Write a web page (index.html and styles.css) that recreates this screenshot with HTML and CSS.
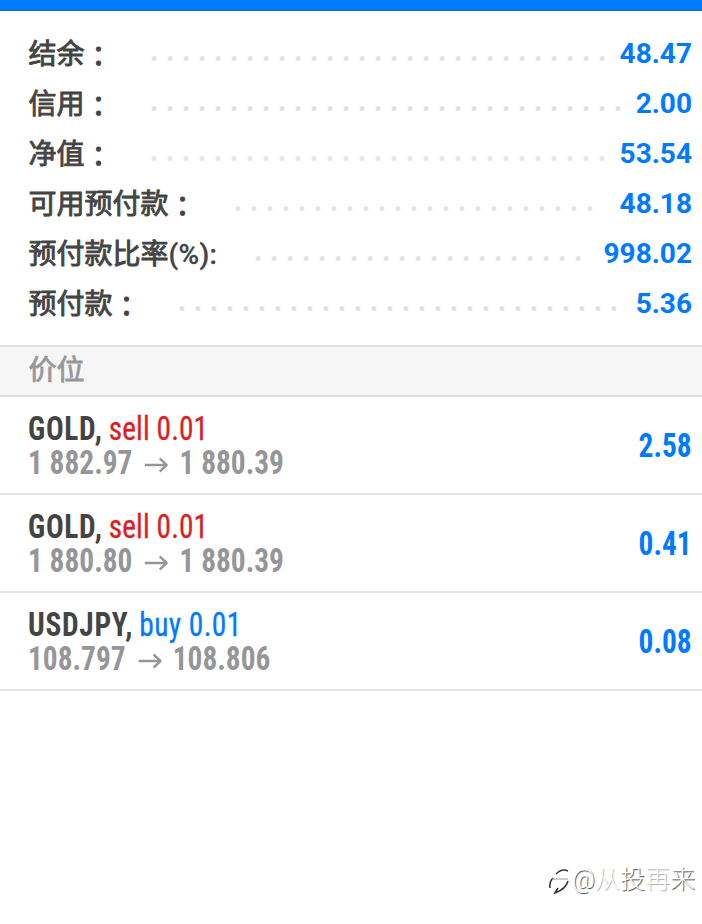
FILE: index.html
```html
<!DOCTYPE html>
<html lang="zh-CN">

<head>
    <meta charset="UTF-8">
    <meta name="viewport" content="width=device-width, initial-scale=1.0">
    <title>价位</title>
    <link rel="stylesheet" href="styles.css">
</head>

<body>
    <div class="topbar"></div>

    <div class="summary">
        <div class="line">
            <span class="label">结余<span class="colon" lang="zh-TW">：</span></span>
            <span class="leader"><span class="dots"></span></span>
            <span class="value">48.47</span>
        </div>
        <div class="line">
            <span class="label">信用<span class="colon" lang="zh-TW">：</span></span>
            <span class="leader"><span class="dots"></span></span>
            <span class="value">2.00</span>
        </div>
        <div class="line">
            <span class="label">净值<span class="colon" lang="zh-TW">：</span></span>
            <span class="leader"><span class="dots"></span></span>
            <span class="value">53.54</span>
        </div>
        <div class="line">
            <span class="label">可用预付款<span class="colon" lang="zh-TW">：</span></span>
            <span class="leader"><span class="dots"></span></span>
            <span class="value">48.18</span>
        </div>
        <div class="line">
            <span class="label">预付款比率<span class="unit">(%):</span></span>
            <span class="leader"><span class="dots"></span></span>
            <span class="value">998.02</span>
        </div>
        <div class="line">
            <span class="label">预付款<span class="colon" lang="zh-TW">：</span></span>
            <span class="leader"><span class="dots"></span></span>
            <span class="value">5.36</span>
        </div>
    </div>

    <h2 class="section-title">价位</h2>

    <div class="positions">
        <div class="position">
            <div class="info">
                <div class="name">GOLD, <span class="sell">sell 0.01</span></div>
                <div class="prices">
                    <span>1 882.97</span>
                    <svg class="arrow" viewBox="0 0 26 18"><path d="M0 9H25M17 2.5L25 9L17 15.5" /></svg>
                    <span>1 880.39</span>
                </div>
            </div>
            <div class="profit">2.58</div>
        </div>
        <div class="position">
            <div class="info">
                <div class="name">GOLD, <span class="sell">sell 0.01</span></div>
                <div class="prices">
                    <span>1 880.80</span>
                    <svg class="arrow" viewBox="0 0 26 18"><path d="M0 9H25M17 2.5L25 9L17 15.5" /></svg>
                    <span>1 880.39</span>
                </div>
            </div>
            <div class="profit">0.41</div>
        </div>
        <div class="position">
            <div class="info">
                <div class="name">USDJPY, <span class="buy">buy 0.01</span></div>
                <div class="prices">
                    <span>108.797</span>
                    <svg class="arrow" viewBox="0 0 26 18"><path d="M0 9H25M17 2.5L25 9L17 15.5" /></svg>
                    <span>108.806</span>
                </div>
            </div>
            <div class="profit">0.08</div>
        </div>
    </div>

    <div class="watermark">
        <svg class="mark" viewBox="0 0 24 28">
            <path class="mark-dark" d="M2 22Q1 16 5 12M8 8Q14 2 20 5M20 15Q18 23 7 27L10 22" />
            <path class="mark-light" d="M4 13H20" />
        </svg>
        <span>@<span class="faint">从</span>投<span class="faint">再</span>来</span>
    </div>
</body>

</html>
```

FILE: styles.css
```css
* {
    box-sizing: border-box;
}

body {
    font-family: Roboto, "Noto Sans CJK SC", sans-serif;
    background-color: #fff;
    color: #444;
    margin: 0;
    height: 924px;
    position: relative;
    overflow: hidden;
}

.topbar {
    height: 11px;
    background-color: #007aff;
    border-bottom: 1px solid #1565cf;
}

.summary {
    height: 334px;
    padding: 18px 10px 0 28.5px;
}

.line {
    display: flex;
    height: 50px;
    line-height: 50px;
    font-size: 28px;
    white-space: nowrap;
}

.label {
    padding-top: 1px;
    font-weight: 400;
    -webkit-text-stroke: 0.9px #444;
}

.colon {
    line-height: 0;
    vertical-align: -3px;
}

.unit {
    font-weight: 500;
    letter-spacing: 0.3px;
    -webkit-text-stroke: 0.3px #444;
}

.leader {
    flex: 1;
    margin: 0 8px 0 33px;
}

/* whole 16px tiles only, so the last dot is never cut */
.dots {
    display: block;
    width: round(down, 100%, 16px);
    height: 50px;
    background: radial-gradient(circle at 8px 29.5px, #e4e4e6 2px, transparent 3px) 0 0 / 16px 50px repeat-x;
}

.value {
    font-weight: 700;
    color: #007aff;
}

.section-title {
    height: 52px;
    margin: 0;
    padding-left: 28.5px;
    border-top: 2px solid #e0e0e2;
    border-bottom: 2px solid #e0e0e2;
    background-color: #f6f6f7;
    color: #96969b;
    font-size: 28px;
    font-weight: 400;
    line-height: 48px;
    -webkit-text-stroke: 0.8px #96969b;
}

.position {
    display: flex;
    justify-content: space-between;
    align-items: center;
    height: 98px;
    padding: 1px 10px 0 28px;
    border-bottom: 2px solid #e2e2e3;
    font-family: "Roboto Condensed", Roboto, sans-serif;
    font-stretch: 75%;
    font-size: 33px;
    font-weight: 700;
    line-height: 34px;
    white-space: nowrap;
}

/* squeeze the condensed face a bit further */
.name,
.prices {
    transform: scaleX(0.89);
    transform-origin: left;
}

.name {
    letter-spacing: 0.8px;
    word-spacing: -1.5px;
}

.name .sell,
.name .buy {
    font-weight: 400;
    word-spacing: 0;
}

.name .sell {
    color: #dc1e23;
    letter-spacing: 0.1px;
    -webkit-text-stroke: 0.3px #dc1e23;
}

.name .buy {
    color: #007aff;
    letter-spacing: 0.5px;
    -webkit-text-stroke: 0.3px #007aff;
}

.prices {
    display: flex;
    align-items: center;
    color: #96969a;
}

.arrow {
    width: 26px;
    height: 18px;
    margin: 4px 13px 0 14px;
    fill: none;
    stroke: #96969a;
    stroke-width: 2.6;
}

.profit {
    color: #007aff;
    transform: scaleX(0.89);
    transform-origin: right;
}

.watermark {
    position: absolute;
    right: 7px;
    bottom: 26px;
    display: flex;
    align-items: center;
    font-size: 25px;
    font-weight: 300;
    line-height: 36px;
    color: #fff;
    text-shadow: 1px 1px 1px #444;
}

.faint {
    text-shadow: 1px 1px 1px #aaa;
}

.mark {
    width: 24px;
    height: 28px;
    fill: none;
}

.mark-dark {
    stroke: #333;
    stroke-width: 1.5;
}

.mark-light {
    stroke: #999;
}
```
